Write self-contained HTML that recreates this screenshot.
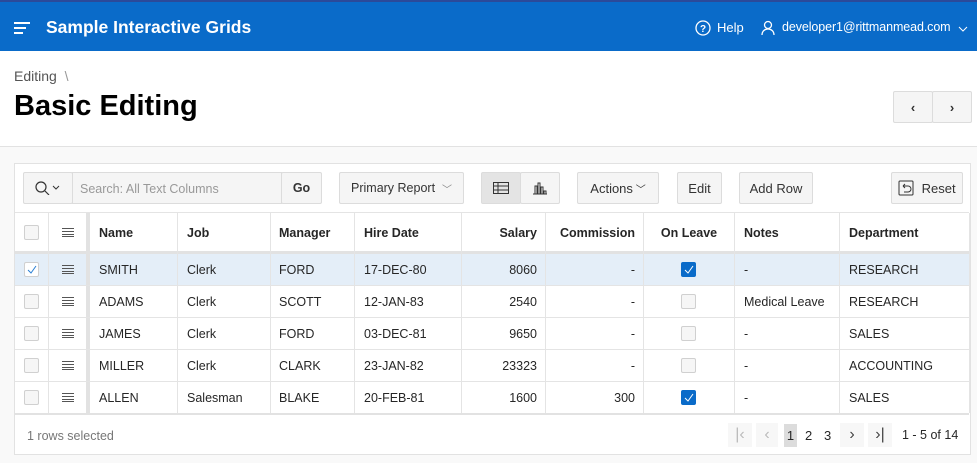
<!DOCTYPE html>
<html><head><style>
*{box-sizing:border-box;margin:0;padding:0}
body{width:977px;height:463px;overflow:hidden;font-family:"Liberation Sans",sans-serif;background:#f9f9f9;position:relative;color:#262626}
.a{position:absolute}
.top{left:0;top:0;width:977px;height:51px;background:#0a6bc9;border-top:2px solid #2b4a9a;color:#fff}
.hdr{left:0;top:51px;width:977px;height:96px;background:#fff;border-bottom:1px solid #e2e2e2}
.btn{position:absolute;background:#f5f5f5;border:1px solid #dcdcdc;border-radius:2px;font-size:13px;color:#333;display:flex;align-items:center;justify-content:center}
.reg{left:14px;top:163px;width:957px;height:292px;background:#fff;border:1px solid #e2e2e2}
.cell{position:absolute;font-size:12.5px;display:flex;align-items:center;height:32px}
.hc{font-weight:bold;font-size:12.5px;height:40px}
.vl{position:absolute;width:1px;background:#e4e4e4}
.hl{position:absolute;height:1px;background:#e4e4e4;left:15px;width:954px}
.cb{position:absolute;width:15px;height:15px;border:1px solid #d0d0d0;border-radius:2px;background:#f6f6f6}
.cbo{background:#0a6bc9;border-color:#0a6bc9}
.menu{position:absolute;width:12px;height:9px;border-top:1px solid #555;border-bottom:1px solid #555}
.menu:before,.menu:after{content:"";position:absolute;left:0;width:12px;height:1px;background:#555}
.menu:before{top:2px}.menu:after{top:5px}
</style></head><body>
<div class="a top">
 <div class="a" style="left:14px;top:20px;width:16px;height:2px;background:#fff"></div>
 <div class="a" style="left:14px;top:25px;width:12px;height:2px;background:#fff"></div>
 <div class="a" style="left:14px;top:30px;width:9px;height:2px;background:#fff"></div>
 <div class="a" style="left:46px;top:15px;font-size:17.5px;font-weight:bold">Sample Interactive Grids</div>
 <svg class="a" style="left:695px;top:18px" width="16" height="16" viewBox="0 0 16 16"><circle cx="8" cy="8" r="7" fill="none" stroke="#fff" stroke-width="1.3"/><text x="8" y="12" font-size="10" fill="#fff" text-anchor="middle" font-family="Liberation Sans" font-weight="bold">?</text></svg>
 <div class="a" style="left:717px;top:18px;font-size:13px">Help</div>
 <svg class="a" style="left:760px;top:18px" width="16" height="16" viewBox="0 0 16 16" fill="none" stroke="#fff" stroke-width="1.3"><circle cx="8" cy="5" r="3.5"/><path d="M2 15c0-4 3-6 6-6s6 2 6 6"/></svg>
 <div class="a" style="left:782px;top:18px;font-size:12.5px;letter-spacing:-0.1px">developer1@rittmanmead.com</div>
 <svg class="a" style="left:958px;top:24px" width="10" height="6"><path d="M1 1l4 4 4-4" stroke="#fff" fill="none"/></svg>
</div>
<div class="a hdr">
 <div class="a" style="left:14px;top:17px;font-size:14px;color:#555">Editing &nbsp;<span style="color:#999">\</span></div>
 <div class="a" style="left:14px;top:39px;font-size:29px;font-weight:bold;color:#000">Basic Editing</div>
 <div class="btn" style="left:893px;top:40px;width:40px;height:32px;font-weight:bold">‹</div>
 <div class="btn" style="left:932px;top:40px;width:40px;height:32px;font-weight:bold">›</div>
</div>
<div class="a reg"></div>
<div class="btn" style="left:23px;top:172px;width:50px;height:32px"><svg width="26" height="14"><circle cx="6" cy="6" r="5" fill="none" stroke="#333" stroke-width="1.2"/><path d="M10 10l4 4" stroke="#333" stroke-width="1.2"/><path d="M18 5l3 3 3-3" fill="none" stroke="#333"/></svg></div>
<div class="a" style="left:72px;top:172px;width:210px;height:32px;border:1px solid #dcdcdc;background:#f5f5f5;font-size:12.5px;color:#999;padding:9px 7px">Search: All Text Columns</div>
<div class="btn" style="left:281px;top:172px;width:41px;height:32px;font-weight:bold;font-size:12.5px">Go</div>
<div class="btn" style="left:339px;top:172px;width:125px;height:32px;font-size:12.5px">Primary Report &nbsp;<span style="color:#888;font-size:10px">﹀</span></div>
<div class="btn" style="left:481px;top:172px;width:40px;height:32px;background:#e4e4e4"><svg width="16" height="12"><rect x=".5" y=".5" width="15" height="11" fill="none" stroke="#333"/><path d="M0 4h16M0 8h16M5 0v12" stroke="#333"/></svg></div>
<div class="btn" style="left:520px;top:172px;width:40px;height:32px"><svg width="16" height="13"><path d="M1 12h14M3 12V4h2v8M6 12V1h2v11M9 12V5h2v7M12 12V9h2v3" fill="none" stroke="#333"/></svg></div>
<div class="btn" style="left:577px;top:172px;width:82px;height:32px">Actions <span style="font-size:10px">&nbsp;﹀</span></div>
<div class="btn" style="left:677px;top:172px;width:45px;height:32px">Edit</div>
<div class="btn" style="left:739px;top:172px;width:74px;height:32px">Add Row</div>
<div class="btn" style="left:891px;top:172px;width:72px;height:32px"><svg width="16" height="16"><rect x="1" y="1" width="14" height="14" rx="1" fill="none" stroke="#333"/><path d="M5 6h5a3 3 0 010 6H6M5 6l2-2M5 6l2 2" fill="none" stroke="#333"/></svg>&nbsp; Reset</div>
<div class="a" style="left:15px;top:212px;width:954px;height:1px;background:#e4e4e4"></div>
<div class="a" style="left:15px;top:254px;width:954px;height:32px;background:#e4eef8"></div>
<div class="a" style="left:15px;top:251px;width:954px;height:3px;background:#e2e2e2"></div>
<div class="a" style="left:86px;top:213px;width:4px;height:201px;background:#e2e2e2"></div>
<div class="a" style="left:15px;top:413px;width:954px;height:2px;background:#e2e2e2"></div>
<div class="vl" style="left:48px;top:213px;height:200px"></div>
<div class="vl" style="left:177px;top:213px;height:200px"></div>
<div class="vl" style="left:270px;top:213px;height:200px"></div>
<div class="vl" style="left:354px;top:213px;height:200px"></div>
<div class="vl" style="left:461px;top:213px;height:200px"></div>
<div class="vl" style="left:545px;top:213px;height:200px"></div>
<div class="vl" style="left:643px;top:213px;height:200px"></div>
<div class="vl" style="left:734px;top:213px;height:200px"></div>
<div class="vl" style="left:839px;top:213px;height:200px"></div>
<div class="vl" style="left:969px;top:213px;height:200px"></div>
<div class="hl" style="top:285px"></div><div class="hl" style="top:317px"></div><div class="hl" style="top:349px"></div><div class="hl" style="top:381px"></div>
<div class="cb" style="left:24px;top:225px"></div><div class="menu" style="left:62px;top:228px"></div>
<div class="cell hc" style="left:99px;top:213px">Name</div>
<div class="cell hc" style="left:187px;top:213px">Job</div>
<div class="cell hc" style="left:279px;top:213px">Manager</div>
<div class="cell hc" style="left:364px;top:213px">Hire Date</div>
<div class="cell hc" style="left:461px;top:213px;width:76px;justify-content:flex-end">Salary</div>
<div class="cell hc" style="left:545px;top:213px;width:90px;justify-content:flex-end">Commission</div>
<div class="cell hc" style="left:644px;top:213px;width:90px;justify-content:center">On Leave</div>
<div class="cell hc" style="left:744px;top:213px">Notes</div>
<div class="cell hc" style="left:849px;top:213px">Department</div>
<div class="cb" style="left:24px;top:262px;background:#fff"><svg class="a" style="left:2px;top:2px" width="10" height="9"><path d="M1 5l3 3 5-7" fill="none" stroke="#2a7fd4"/></svg></div>
<div class="menu" style="left:62px;top:265px"></div>
<div class="cell" style="left:99px;top:254px">SMITH</div><div class="cell" style="left:187px;top:254px">Clerk</div><div class="cell" style="left:279px;top:254px">FORD</div><div class="cell" style="left:364px;top:254px">17-DEC-80</div><div class="cell" style="left:461px;top:254px;width:76px;justify-content:flex-end">8060</div><div class="cell" style="left:545px;top:254px;width:90px;justify-content:flex-end">-</div><div class="cb cbo" style="left:681px;top:262px"><svg class="a" style="left:2px;top:2px" width="10" height="9"><path d="M1 5l3 3 5-7" fill="none" stroke="#fff"/></svg></div><div class="cell" style="left:744px;top:254px">-</div><div class="cell" style="left:849px;top:254px">RESEARCH</div>
<div class="cb" style="left:24px;top:294px"></div><div class="menu" style="left:62px;top:297px"></div>
<div class="cell" style="left:99px;top:286px">ADAMS</div><div class="cell" style="left:187px;top:286px">Clerk</div><div class="cell" style="left:279px;top:286px">SCOTT</div><div class="cell" style="left:364px;top:286px">12-JAN-83</div><div class="cell" style="left:461px;top:286px;width:76px;justify-content:flex-end">2540</div><div class="cell" style="left:545px;top:286px;width:90px;justify-content:flex-end">-</div><div class="cb" style="left:681px;top:294px"></div><div class="cell" style="left:744px;top:286px">Medical Leave</div><div class="cell" style="left:849px;top:286px">RESEARCH</div>
<div class="cb" style="left:24px;top:326px"></div><div class="menu" style="left:62px;top:329px"></div>
<div class="cell" style="left:99px;top:318px">JAMES</div><div class="cell" style="left:187px;top:318px">Clerk</div><div class="cell" style="left:279px;top:318px">FORD</div><div class="cell" style="left:364px;top:318px">03-DEC-81</div><div class="cell" style="left:461px;top:318px;width:76px;justify-content:flex-end">9650</div><div class="cell" style="left:545px;top:318px;width:90px;justify-content:flex-end">-</div><div class="cb" style="left:681px;top:326px"></div><div class="cell" style="left:744px;top:318px">-</div><div class="cell" style="left:849px;top:318px">SALES</div>
<div class="cb" style="left:24px;top:358px"></div><div class="menu" style="left:62px;top:361px"></div>
<div class="cell" style="left:99px;top:350px">MILLER</div><div class="cell" style="left:187px;top:350px">Clerk</div><div class="cell" style="left:279px;top:350px">CLARK</div><div class="cell" style="left:364px;top:350px">23-JAN-82</div><div class="cell" style="left:461px;top:350px;width:76px;justify-content:flex-end">23323</div><div class="cell" style="left:545px;top:350px;width:90px;justify-content:flex-end">-</div><div class="cb" style="left:681px;top:358px"></div><div class="cell" style="left:744px;top:350px">-</div><div class="cell" style="left:849px;top:350px">ACCOUNTING</div>
<div class="cb" style="left:24px;top:390px"></div><div class="menu" style="left:62px;top:393px"></div>
<div class="cell" style="left:99px;top:382px">ALLEN</div><div class="cell" style="left:187px;top:382px">Salesman</div><div class="cell" style="left:279px;top:382px">BLAKE</div><div class="cell" style="left:364px;top:382px">20-FEB-81</div><div class="cell" style="left:461px;top:382px;width:76px;justify-content:flex-end">1600</div><div class="cell" style="left:545px;top:382px;width:90px;justify-content:flex-end">300</div><div class="cb cbo" style="left:681px;top:390px"><svg class="a" style="left:2px;top:2px" width="10" height="9"><path d="M1 5l3 3 5-7" fill="none" stroke="#fff"/></svg></div><div class="cell" style="left:744px;top:382px">-</div><div class="cell" style="left:849px;top:382px">SALES</div>
<div class="a" style="left:27px;top:429px;font-size:12.5px;color:#777">1 rows selected</div>
<div class="a" style="left:728px;top:423px;width:24px;height:24px;background:#f7f7f7;color:#bbb;font-size:16px;text-align:center;line-height:24px">|‹</div>
<div class="a" style="left:756px;top:423px;width:22px;height:24px;background:#f7f7f7;color:#bbb;font-size:16px;text-align:center;line-height:24px">‹</div>
<div class="a" style="left:784px;top:424px;width:13px;height:23px;background:#dcdcdc;font-size:13px;text-align:center;line-height:23px">1</div>
<div class="a" style="left:805px;top:424px;font-size:13px;line-height:23px">2</div>
<div class="a" style="left:824px;top:424px;font-size:13px;line-height:23px">3</div>
<div class="a" style="left:840px;top:423px;width:24px;height:24px;background:#f7f7f7;color:#444;font-size:16px;text-align:center;line-height:24px">›</div>
<div class="a" style="left:868px;top:423px;width:24px;height:24px;background:#f7f7f7;color:#444;font-size:16px;text-align:center;line-height:24px">›|</div>
<div class="a" style="left:902px;top:428px;font-size:12.5px">1 - 5 of 14</div>
</body></html>
